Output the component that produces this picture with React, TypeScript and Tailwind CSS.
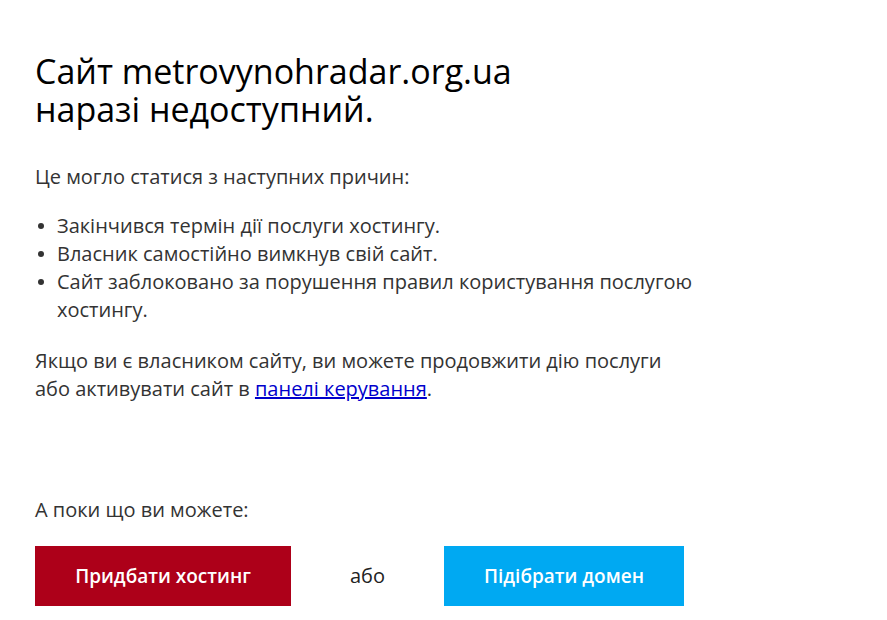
export default function App() {
  return (
    <div className="min-h-screen bg-white px-[35px] pt-[52px] font-['Open_Sans',sans-serif] text-[#333]">
      <h1 className="text-[34px] leading-[38px] text-black">
        Сайт metrovynohradar.org.ua
        <br />
        наразі недоступний.
      </h1>

      <p className="mt-[35px] text-[20px] leading-[28px]">Це могло статися з наступних причин:</p>

      <ul className="mt-[21px] w-[700px] text-[20px] leading-[28px]">
        {[
          'Закінчився термін дії послуги хостингу.',
          'Власник самостійно вимкнув свій сайт.',
          'Сайт заблоковано за порушення правил користування послугою хостингу.',
        ].map((item) => (
          <li key={item} className="flex">
            <span className="flex h-[28px] w-[22px] shrink-0 items-center pl-[3px]">
              <span className="h-[6px] w-[6px] rounded-full bg-[#333]" />
            </span>
            <span>{item}</span>
          </li>
        ))}
      </ul>

      <p className="mt-[23px] w-[700px] text-[20px] leading-[28px]">
        Якщо ви є власником сайту, ви можете продовжити дію послуги
        <br />
        або активувати сайт в{' '}
        <a href="#" className="text-[#0000cc] underline">
          панелі керування
        </a>
        .
      </p>

      <p className="mt-[93px] text-[20px] leading-[28px]">А поки що ви можете:</p>

      <div className="mt-[22px] flex items-center">
        <button className="h-[60px] w-[256px] bg-[#ad0019] text-[19px] font-semibold text-white">
          Придбати хостинг
        </button>
        <span className="w-[153px] text-center text-[20px] text-[#222]">або</span>
        <button className="h-[60px] w-[240px] bg-[#00a9f2] text-[19px] font-semibold text-white">
          Підібрати домен
        </button>
      </div>
    </div>
  );
}
